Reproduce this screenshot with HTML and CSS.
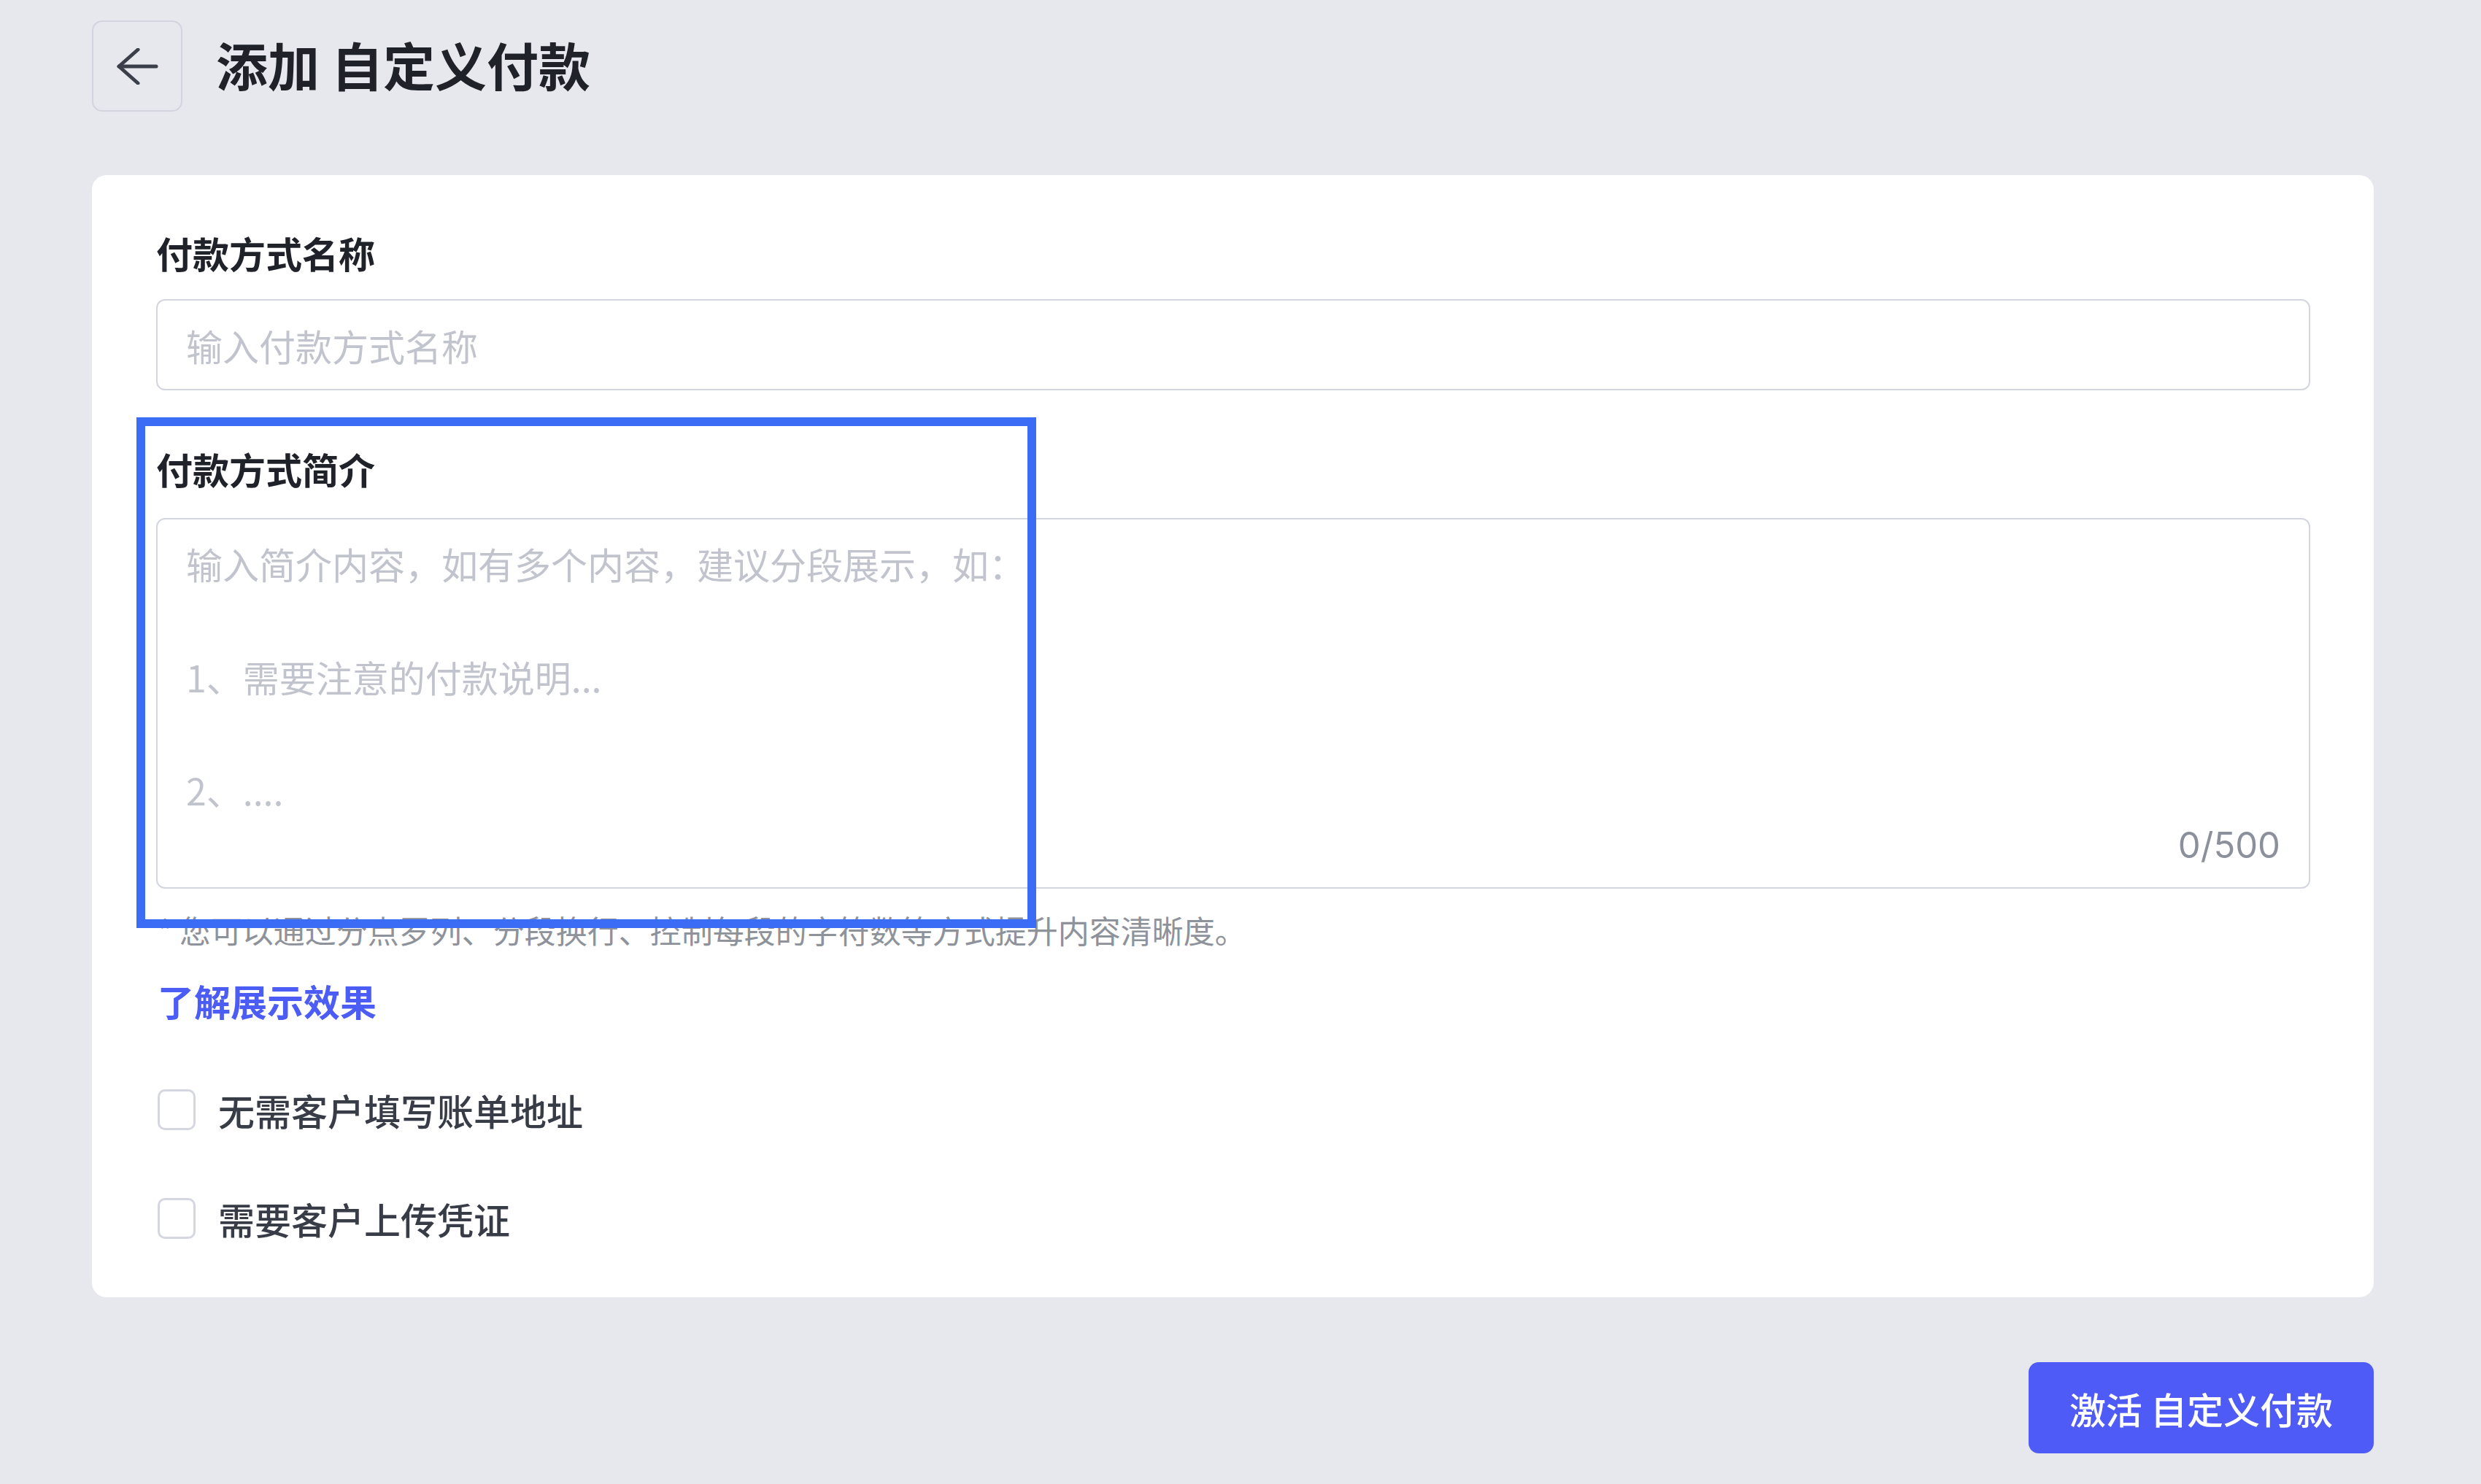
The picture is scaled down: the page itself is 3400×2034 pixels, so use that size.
FILE: index.html
```html
<!DOCTYPE html>
<html lang="zh-CN">
<head>
    <meta charset="UTF-8">
    <meta name="viewport" content="width=device-width, initial-scale=1.0">
    <title>添加 自定义付款</title>
    <link rel="stylesheet" href="styles.css">
</head>
<body>

    <div class="page">
        <!-- highlight box drawn over the intro field -->
        <div class="annotation"></div>

        <header class="topbar">
            <button class="back-btn" type="button">
                <svg width="58" height="50" viewBox="0 0 58 50" fill="none" stroke="#3b3f4a" stroke-width="5" stroke-linecap="round" stroke-linejoin="round">
                    <path d="M4 25H55"/>
                    <path d="M30 2L4 25L30 48"/>
                </svg>
            </button>
            <h1>添加 自定义付款</h1>
        </header>

        <div class="card">
            <div class="field">
                <label class="field-label">付款方式名称</label>
                <input class="text-input" type="text" placeholder="输入付款方式名称">
            </div>

            <div class="field field-intro">
                <label class="field-label">付款方式简介</label>
                <div class="textarea-box">
                    <textarea class="intro-text" placeholder="输入简介内容，如有多个内容，建议分段展示，如：&#10;&#10;1、需要注意的付款说明...&#10;&#10;2、...."></textarea>
                    <div class="counter">0/500</div>
                </div>
                <p class="hint">* 您可以通过分点罗列、分段换行、控制每段的字符数等方式提升内容清晰度。</p>
                <a class="link" href="#">了解展示效果</a>
            </div>

            <label class="check-row check-first">
                <input type="checkbox">
                <span>无需客户填写账单地址</span>
            </label>
            <label class="check-row">
                <input type="checkbox">
                <span>需要客户上传凭证</span>
            </label>
        </div>

        <div class="actions">
            <button class="primary-btn" type="button">激活 自定义付款</button>
        </div>
    </div>

</body>
</html>
```

FILE: styles.css
```css
body {
    margin: 0;
    padding: 0;
    background-color: #e6e8ed;
    font-family: "Noto Sans CJK SC", "Noto Sans", sans-serif;
    color: #1f2329;
}
.page {
    position: relative;
    padding: 28px 147px 0 126px;
}
.annotation {
    position: absolute;
    left: 187px;
    top: 572px;
    width: 1233px;
    height: 700px;
    box-sizing: border-box;
    border: 12px solid #3a6cf6;
    pointer-events: none;
    z-index: 2;
}
.topbar {
    display: flex;
    align-items: center;
    gap: 46px;
    height: 125px;
}
.back-btn {
    width: 124px;
    height: 125px;
    display: flex;
    align-items: center;
    justify-content: center;
    padding: 0;
    background: transparent;
    border: 2px solid #d2d5df;
    border-radius: 14px;
}
.topbar h1 {
    margin: 0 0 6px;
    font-size: 71px;
    font-weight: 700;
    line-height: 1;
    color: #1f2329;
}
.card {
    margin-top: 87px;
    background-color: #fff;
    border-radius: 20px;
    padding: 70px 87px 72px 88px;
}
.field {
    display: flex;
    flex-direction: column;
}
.field-label {
    font-size: 50px;
    line-height: 72px;
    font-weight: 700;
    color: #1f2329;
}
.text-input {
    margin-top: 28px;
    height: 125px;
    box-sizing: border-box;
    border: 2px solid #d3d6df;
    border-radius: 12px;
    padding: 0 39px;
    font-family: inherit;
    font-size: 50px;
    color: #1f2329;
    outline: none;
}
.text-input::placeholder,
.intro-text::placeholder {
    color: #c1c4cc;
}
.field-intro {
    margin-top: 71px;
}
.textarea-box {
    margin-top: 32px;
    height: 508px;
    box-sizing: border-box;
    border: 2px solid #d3d6df;
    border-radius: 12px;
    display: flex;
    flex-direction: column;
}
.intro-text {
    flex: 1;
    border: none;
    outline: none;
    resize: none;
    padding: 22px 39px 0;
    font-family: inherit;
    font-size: 50px;
    line-height: 77.5px;
    background: transparent;
}
.counter {
    text-align: right;
    padding: 0 39px 27px;
    font-family: Inter, "Noto Sans", sans-serif;
    font-size: 49px;
    line-height: 60px;
    color: #8b909a;
}
.hint {
    margin: 28px 0 0;
    padding-left: 2px;
    font-size: 43px;
    line-height: 56px;
    color: #8e929b;
}
.link {
    margin-top: 33px;
    padding-left: 2px;
    font-size: 50px;
    line-height: 72px;
    font-weight: 700;
    color: #4c5df6;
    text-decoration: none;
}
.check-row {
    display: flex;
    align-items: center;
    gap: 31px;
    height: 72px;
    margin-top: 77px;
    padding-left: 2px;
    font-size: 50px;
    font-weight: 500;
    color: #383c46;
}
.check-row input {
    appearance: none;
    margin: 0;
    width: 52px;
    height: 56px;
    border: 3px solid #d4d7e0;
    border-radius: 10px;
    background: #fff;
}
.check-first {
    margin-top: 78px;
}
.actions {
    display: flex;
    justify-content: flex-end;
    margin-top: 89px;
}
.primary-btn {
    width: 473px;
    height: 125px;
    border: none;
    border-radius: 14px;
    background-color: #4f5bf7;
    color: #fff;
    font-family: inherit;
    font-size: 50px;
    font-weight: 500;
}
```
